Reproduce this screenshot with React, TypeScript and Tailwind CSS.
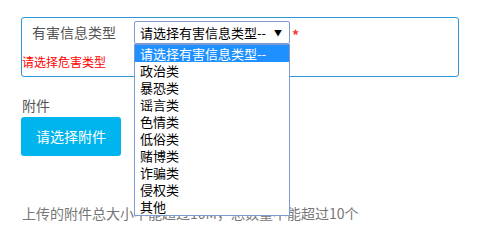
import React from "react";

const options = [
  "请选择有害信息类型--",
  "政治类",
  "暴恐类",
  "谣言类",
  "色情类",
  "低俗类",
  "赌博类",
  "诈骗类",
  "侵权类",
  "其他",
];

export default function App() {
  return (
    <div
      className="relative w-[496px] h-[239px] bg-white overflow-hidden"
      style={{ fontFamily: '"Noto Sans CJK SC", "Liberation Sans", sans-serif' }}
    >
      {/* 类型面板 */}
      <div className="ml-[21px] mt-[17px] w-[438px] h-[60px] border border-[#2b95d6] rounded-[3px]">
        <div className="flex items-start pt-[3px]">
          <div className="w-[112px] pl-[10px] pt-[1px] text-[14px] leading-[20px] text-[#555]">
            有害信息类型
          </div>
          <div className="relative">
            <div className="w-[156px] h-[23px] border border-[#7d9bcf] rounded-[2px] flex items-center pl-[5px] pr-[7px] text-[13px] text-black">
              <span className="flex-1 leading-none">请选择有害信息类型--</span>
              <span className="text-[8px] leading-none">▼</span>
            </div>
            <span className="absolute left-[158px] top-[7px] text-[14px] font-bold leading-none text-[#f33]">*</span>
          </div>
        </div>
        <div className="mt-[10px] text-[12px] leading-[16px] text-[#ff0000]">请选择危害类型</div>
      </div>

      {/* 附件 */}
      <div className="ml-[22px] mt-[19px] text-[14px] leading-[18px] text-[#555]">附件</div>
      <button className="ml-[21px] mt-[3px] w-[100px] h-[39px] rounded-[3px] bg-[#00b5ee] text-white text-[14px]">
        请选择附件
      </button>
      <div className="ml-[22px] mt-[48px] text-[14px] leading-[18px] text-[#777]">
        上传的附件总大小不能超过10M，总数量不能超过10个
      </div>

      {/* 下拉列表 */}
      <div className="absolute left-[134px] top-[44px] w-[156px] h-[172px] bg-white border border-[#7d9bcf]">
        {options.map((o, i) => (
          <div
            key={o}
            className={`h-[17px] pl-[5px] text-[13px] leading-[17px] ${
              i === 0 ? "bg-[#1e90ff] text-white" : "text-black"
            }`}
          >
            {o}
          </div>
        ))}
      </div>
    </div>
  );
}
